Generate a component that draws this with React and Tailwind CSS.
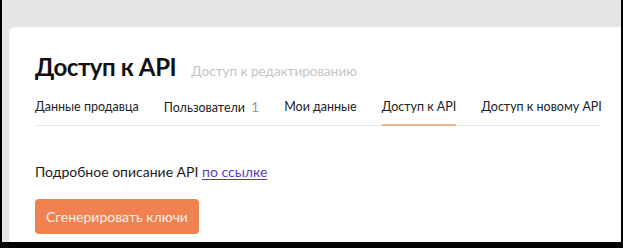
export default function App() {
  const tabs = [
    { label: "Данные продавца" },
    { label: "Пользователи", count: 1 },
    { label: "Мои данные" },
    { label: "Доступ к API", active: true },
    { label: "Доступ к новому API" },
  ];

  return (
    <div
      className="w-[623px] h-[248px] bg-black overflow-hidden"
      style={{ fontFamily: "Lato, 'Noto Sans', sans-serif" }}
    >
      <div className="ml-[2px] mr-[2px] h-[242px] bg-[#e6e6e6] pt-[27px] pl-[7px] flex flex-col">
        <div className="flex-1 bg-white rounded-tl-[6px] pl-[26px] pr-[20px] pt-[25px]">
          <div className="flex items-baseline gap-[15px]">
            <h1 className="text-[24px] font-bold text-[#111] leading-[30px] tracking-[-0.4px] whitespace-nowrap">Доступ к API</h1>
            <span className="text-[13.5px] text-[#c4c4c4] whitespace-nowrap">Доступ к редактированию</span>
          </div>

          <div className="mt-[16px] flex gap-[25px] border-b border-[#e8e8e8] w-[565px]">
            {tabs.map((t) => (
              <div
                key={t.label}
                className={`shrink-0 whitespace-nowrap pb-[7px] text-[12.5px] text-[#222] leading-[18px] -mb-px border-b-2 ${
                  t.active ? "border-[#f3b08c]" : "border-transparent"
                }`}
              >
                {t.label}
                {t.count && <span className="ml-[6px] text-[#999] text-[14px]">{t.count}</span>}
              </div>
            ))}
          </div>

          <p className="mt-[36px] text-[14px] text-[#1a1a1a] leading-[20px]">
            Подробное описание API{" "}
            <a href="#" className="text-[#5b3fae] underline underline-offset-2">по ссылке</a>
          </p>

          <button className="mt-[17px] w-[164px] h-[35px] rounded-[4px] bg-[#ef8250] text-[#fdeee6] text-[14px]">
            Сгенерировать ключи
          </button>
        </div>
      </div>
    </div>
  );
}
